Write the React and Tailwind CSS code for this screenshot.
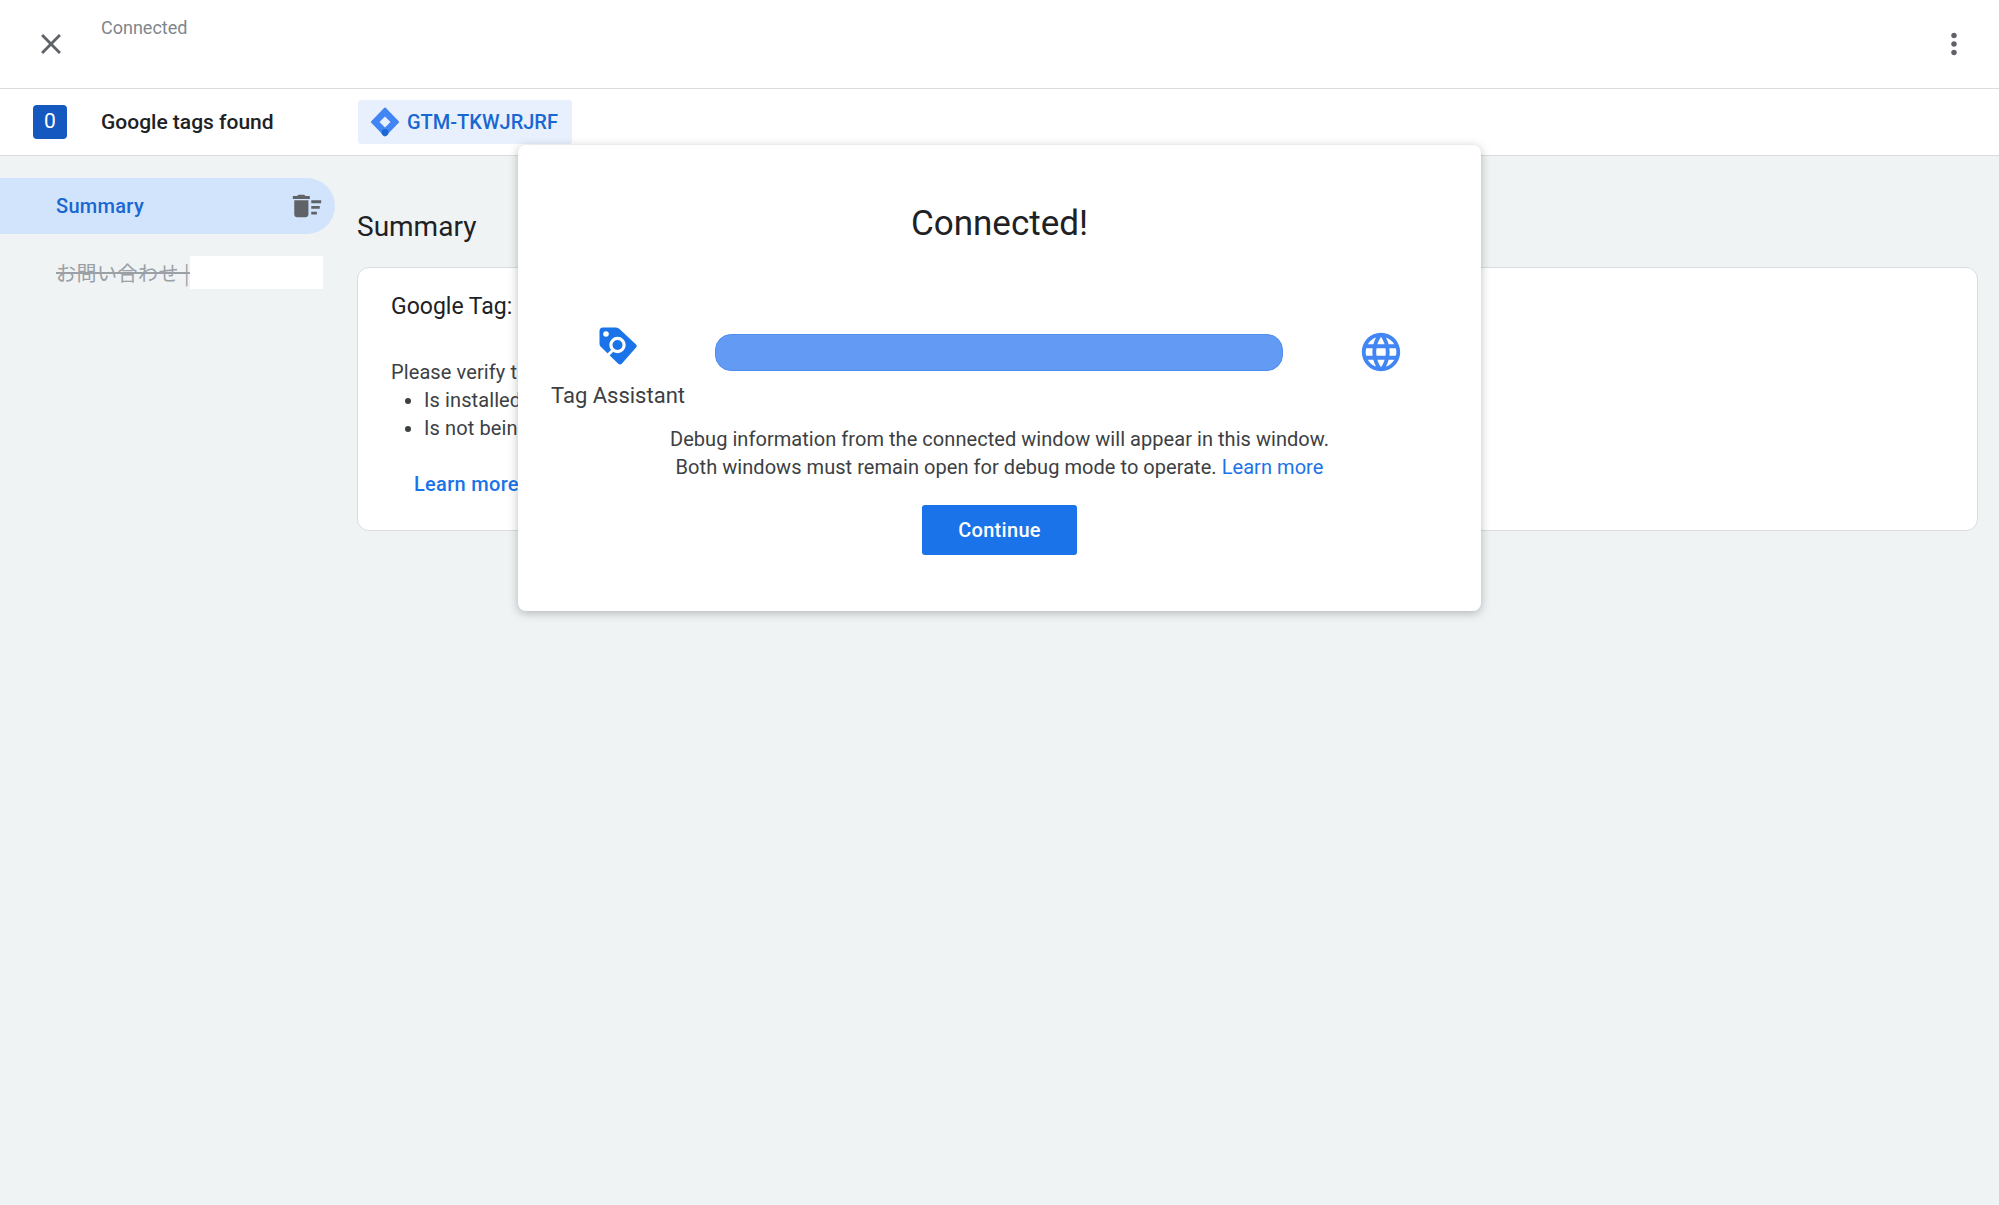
import { MdClose, MdMoreVert, MdDeleteSweep, MdLanguage } from "react-icons/md"

const GtmLogo = () => (
  <svg viewBox="0 0 28 30" className="w-7 h-[30px] shrink-0">
    <path d="M14 1.5 27 15 14 28.5 1 15Z" fill="#4285f4" stroke="#4285f4" strokeWidth="2" strokeLinejoin="round" />
    <path d="M14 9.5 19.5 15 14 20.5 8.5 15Z" fill="#e8f0fe" />
    <circle cx="14" cy="25.5" r="3.4" fill="#1967d2" />
  </svg>
)

const TagIcon = () => (
  <svg viewBox="0 0 38 38" className="w-[38px] h-[38px]">
    <path
      d="M4 0.5H17Q19 0.5 20.5 2L37 17.5Q38.5 19 37 20.5L23 36.5Q21 38.5 19 36.5L1.5 19.5Q0.5 18.5 0.5 16.5V4Q0.5 0.5 4 0.5Z"
      fill="#1a73e8"
    />
    <circle cx="7" cy="7" r="2.8" fill="#fff" />
    <circle cx="18.5" cy="18" r="6.6" fill="none" stroke="#fff" strokeWidth="3.2" />
    <path d="M14 23 6 31" stroke="#fff" strokeWidth="3" />
  </svg>
)

const App = () => {
  return (
    <div className="relative min-h-[1205px] bg-[#eff3f4] font-['Roboto',sans-serif] text-[#202124] overflow-hidden">
      {/* Top bar */}
      <div className="h-[89px] bg-white border-b border-[#dadce0] flex justify-between">
        <div className="flex">
          <div className="w-[101px] flex items-center justify-center">
            <MdClose className="w-[34px] h-[34px] text-[#5f6368]" />
          </div>
          <div className="pt-[18px] text-[18px] leading-5 text-[#80868b]">Connected</div>
        </div>
        <div className="w-[90px] flex items-center justify-center">
          <MdMoreVert className="w-[34px] h-[34px] text-[#5f6368]" />
        </div>
      </div>

      {/* Tags row */}
      <div className="h-[67px] bg-white border-b border-[#dadce0] flex items-center">
        <div className="ml-[33px] w-[34px] h-[34px] rounded-[4px] bg-[#1558bf] text-white text-[21px] flex items-center justify-center">
          0
        </div>
        <div className="ml-[34px] pt-[2px] w-[257px] text-[21px] font-medium text-[#202124]">Google tags found</div>
        <div className="w-[214px] h-11 rounded-[3px] bg-[#e8f0fe] flex items-center pl-[13px] gap-[8px] text-[#1967d2] text-[20px] font-medium">
          <GtmLogo />
          <span>GTM-TKWJRJRF</span>
        </div>
      </div>

      <div className="flex">
        {/* Sidebar */}
        <div className="w-[357px] shrink-0 pt-[22px]">
          <div className="w-[335px] h-[56px] bg-[#d2e3fc] rounded-r-full flex items-center justify-between pl-[56px] pr-[11px]">
            <span className="text-[#1967d2] text-[20px] tracking-[0.3px] font-medium">Summary</span>
            <MdDeleteSweep className="w-[34px] h-[34px] text-[#5f6368]" />
          </div>
          <div className="mt-[22px] h-[33px] flex items-center pl-[56px]">
            <span className="whitespace-nowrap text-[20px] tracking-[0.5px] leading-none text-[#9aa0a6] line-through font-['Noto_Sans_CJK_JP',sans-serif]">
              お問い合わせ |
            </span>
            <div className="w-[133px] h-[33px] bg-white"></div>
          </div>
        </div>

        {/* Main */}
        <div className="flex-1 pr-[21px] pt-[50px]">
          <h1 className="text-[28px] leading-[42px] font-normal">Summary</h1>
          <div className="mt-[19px] h-[264px] bg-white border border-[#dadce0] rounded-[12px] pl-[33px] pt-[24px]">
            <h2 className="text-[23px] leading-[30px] font-normal">Google Tag:</h2>
            <p className="mt-[36px] text-[20px] tracking-[0.1px] leading-7 text-[#3c4043]">Please verify that the tag:</p>
            <ul className="list-disc pl-[33px] text-[20px] tracking-[0.1px] leading-7 text-[#3c4043]">
              <li>Is installed on all pages</li>
              <li>Is not being blocked</li>
            </ul>
            <div className="mt-[28px] pl-[23px] text-[20px] tracking-[0.3px] leading-7 font-medium text-[#1a73e8]">Learn more</div>
          </div>
        </div>
      </div>

      {/* Connected dialog */}
      <div className="absolute left-[518px] top-[145px] w-[963px] h-[466px] bg-white rounded-[8px] shadow-[0_2px_10px_rgba(60,64,67,0.35)]">
        <h2 className="pt-[56px] text-center text-[35px] leading-[46px] font-normal">Connected!</h2>
        <div className="mt-[87px] flex items-start">
          <div className="w-[200px] -mt-[7px] flex flex-col items-center">
            <TagIcon />
            <div className="mt-[16px] text-[22px] leading-[30px] text-[#3c4043]">Tag Assistant</div>
          </div>
          <div className="ml-[-3px] w-[568px] h-[37px] rounded-[16px] bg-[#639bf4] border border-[#4e8ef3]"></div>
          <MdLanguage className="ml-[75px] -mt-[5px] w-[46px] h-[46px] text-[#4285f4]" />
        </div>
        <div className="mt-[14px] text-center text-[20px] tracking-[0.05px] leading-7 text-[#3c4043]">
          <p>Debug information from the connected window will appear in this window.</p>
          <p>
            Both windows must remain open for debug mode to operate.{" "}
            <span className="text-[#1a73e8]">Learn more</span>
          </p>
        </div>
        <div className="mt-[24px] flex justify-center">
          <button className="w-[155px] h-[50px] rounded-[3px] bg-[#1a73e8] text-white text-[20px] tracking-[0.3px] font-medium">
            Continue
          </button>
        </div>
      </div>
    </div>
  )
}

export default App
